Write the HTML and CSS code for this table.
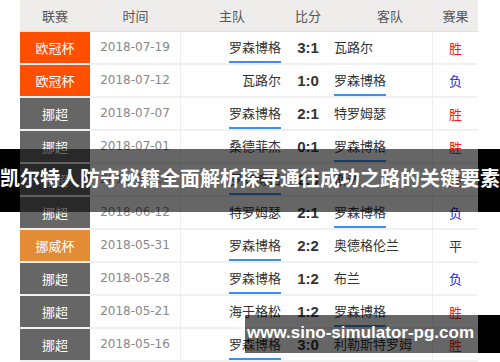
FILE: index.html
```html
<!DOCTYPE html>
<html lang="zh-CN">
<head>
<meta charset="utf-8">
<title>罗森博格 赛程</title>
<link rel="stylesheet" href="styles.css">
</head>
<body>
<div class="page">
  <div class="table">
    <div class="row head">
      <div class="c lg">联赛</div>
      <div class="c dt">时间</div>
      <div class="c hm">主队</div>
      <div class="c sc">比分</div>
      <div class="c aw">客队</div>
      <div class="c rs">赛果</div>
    </div>
    <div class="row">
      <div class="c lg ucl">欧冠杯</div>
      <div class="c dt">2018-07-19</div>
      <div class="c hm"><span class="tm me">罗森博格</span></div>
      <div class="c sc">3:1</div>
      <div class="c aw"><span class="tm">瓦路尔</span></div>
      <div class="c rs win">胜</div>
    </div>
    <div class="row">
      <div class="c lg ucl">欧冠杯</div>
      <div class="c dt">2018-07-12</div>
      <div class="c hm"><span class="tm">瓦路尔</span></div>
      <div class="c sc">1:0</div>
      <div class="c aw"><span class="tm me">罗森博格</span></div>
      <div class="c rs loss">负</div>
    </div>
    <div class="row">
      <div class="c lg nor">挪超</div>
      <div class="c dt">2018-07-07</div>
      <div class="c hm"><span class="tm me">罗森博格</span></div>
      <div class="c sc">2:1</div>
      <div class="c aw"><span class="tm">特罗姆瑟</span></div>
      <div class="c rs win">胜</div>
    </div>
    <div class="row">
      <div class="c lg nor">挪超</div>
      <div class="c dt">2018-07-01</div>
      <div class="c hm"><span class="tm">桑德菲杰</span></div>
      <div class="c sc">0:1</div>
      <div class="c aw"><span class="tm me">罗森博格</span></div>
      <div class="c rs win">胜</div>
    </div>
    <div class="row">
      <div class="c lg nor">挪超</div>
      <div class="c dt">2018-06-17</div>
      <div class="c hm"><span class="tm me">罗森博格</span></div>
      <div class="c sc">2:0</div>
      <div class="c aw"><span class="tm">斯达</span></div>
      <div class="c rs win">胜</div>
    </div>
    <div class="row">
      <div class="c lg nor">挪超</div>
      <div class="c dt">2018-06-12</div>
      <div class="c hm"><span class="tm">特罗姆瑟</span></div>
      <div class="c sc">2:1</div>
      <div class="c aw"><span class="tm me">罗森博格</span></div>
      <div class="c rs loss">负</div>
    </div>
    <div class="row">
      <div class="c lg cup">挪威杯</div>
      <div class="c dt">2018-05-31</div>
      <div class="c hm"><span class="tm me">罗森博格</span></div>
      <div class="c sc">2:2</div>
      <div class="c aw"><span class="tm">奥德格伦兰</span></div>
      <div class="c rs draw">平</div>
    </div>
    <div class="row">
      <div class="c lg nor">挪超</div>
      <div class="c dt">2018-05-28</div>
      <div class="c hm"><span class="tm me">罗森博格</span></div>
      <div class="c sc">1:2</div>
      <div class="c aw"><span class="tm">布兰</span></div>
      <div class="c rs loss">负</div>
    </div>
    <div class="row">
      <div class="c lg nor">挪超</div>
      <div class="c dt">2018-05-21</div>
      <div class="c hm"><span class="tm">海于格松</span></div>
      <div class="c sc">1:2</div>
      <div class="c aw"><span class="tm me">罗森博格</span></div>
      <div class="c rs win">胜</div>
    </div>
    <div class="row">
      <div class="c lg nor">挪超</div>
      <div class="c dt">2018-05-16</div>
      <div class="c hm"><span class="tm me">罗森博格</span></div>
      <div class="c sc">3:0</div>
      <div class="c aw"><span class="tm">利勒斯特罗姆</span></div>
      <div class="c rs win">胜</div>
    </div>
  </div>
  <div class="band title">凯尔特人防守秘籍全面解析探寻通往成功之路的关键要素</div>
  <div class="band url">www.sino-simulator-pg.com</div>
</div>
</body>
</html>
```
FILE: styles.css
```css
html, body {
  margin: 0;
  padding: 0;
  background: #fff;
}
.page {
  position: relative;
  width: 500px;
  height: 362px;
  overflow: hidden;
  font-family: "Noto Sans CJK SC", "Liberation Sans", sans-serif;
}
.table {
  margin-left: 20px;
  width: 458px;
}
.row {
  display: grid;
  grid-template-columns: 70px 91px 109px 36px 107px 45px;
  height: 33px;
}
.c {
  box-sizing: border-box;
  height: 33px;
  border-bottom: 2px solid #f0f0f0;
  font-size: 13px;
  line-height: 31px;
  color: #333;
  white-space: nowrap;
  overflow: hidden;
}
.lg {
  text-align: center;
  color: #fff;
}
.ucl { background: #fe5000; }
.nor { background: #666; }
.cup { background: #e38c35; }
.dt {
  text-align: center;
  color: #888;
  font-family: "DejaVu Sans", sans-serif;
  font-size: 12px;
  border-right: 1px solid #eee;
}
.hm {
  text-align: right;
  padding-right: 9px;
}
.sc {
  text-align: center;
  font-family: "Liberation Sans", sans-serif;
  font-weight: bold;
  font-size: 15px;
}
.aw {
  text-align: left;
  padding-left: 8px;
  border-right: 1px solid #eee;
}
.rs { text-align: center; }
.head {
  height: 32px;
  background: #eeedeb;
}
.head .c {
  height: 32px;
  line-height: 31px;
  border-bottom: 1px solid #e0e0e0;
  border-right: 0;
  color: #555;
  font-family: "Noto Sans CJK SC", sans-serif;
  font-weight: normal;
  font-size: 13px;
  text-align: center;
  padding-left: 0;
  padding-right: 0;
}
.head .hm { padding-right: 7px; }
.head .aw { padding-left: 21px; }
.tm {
  display: inline-block;
  height: 31px;
  line-height: 29px;
  box-sizing: border-box;
  vertical-align: top;
}
.tm.me { border-bottom: 2px solid #3d8ef3; }
.win { color: #ff1a1a; }
.loss { color: #2020e8; }
.draw { color: #333; }
.band {
  position: absolute;
  color: #fff;
  font-weight: bold;
  white-space: nowrap;
}
.title {
  left: 0;
  right: 0;
  top: 149px;
  height: 63px;
  line-height: 57px;
  text-align: center;
  font-size: 20px;
  background: linear-gradient(to right, #000 0, #000 20px, rgba(0,0,0,0.6) 20px, rgba(0,0,0,0.6) 478px, #000 478px);
  font-family: "Noto Sans CJK SC", sans-serif;
}
.url {
  left: 245px;
  right: 0;
  top: 315px;
  height: 38px;
  line-height: 36px;
  padding-left: 2px;
  font-size: 17px;
  font-family: "Liberation Sans", sans-serif;
  background: linear-gradient(to right, rgba(0,0,0,0.6) 0, rgba(0,0,0,0.6) 233px, #000 233px);
}
```
